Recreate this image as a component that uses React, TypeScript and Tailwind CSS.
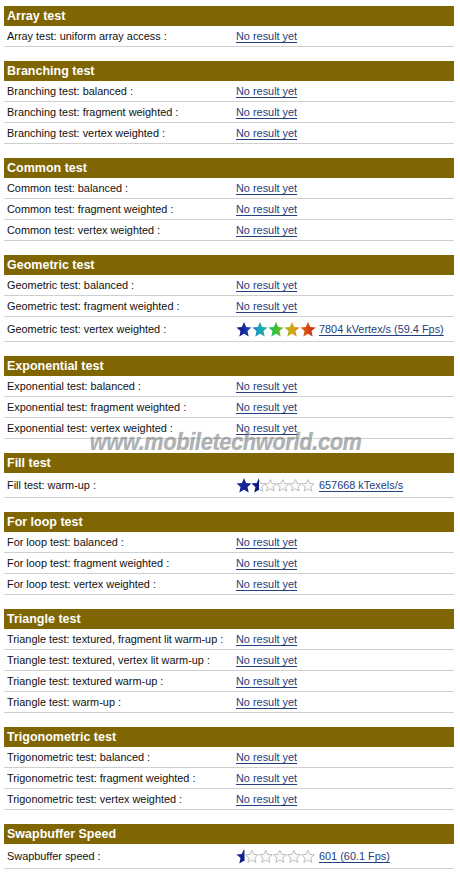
import React from 'react'

type Rating = 'geo' | 'fill' | 'swap'

type Row = {
  label: string
  rating?: Rating
  result?: string
}

type Section = {
  title: string
  rows: Row[]
}

const SECTIONS: Section[] = [
  { title: 'Array test', rows: [{ label: 'Array test: uniform array access :' }] },
  {
    title: 'Branching test',
    rows: [
      { label: 'Branching test: balanced :' },
      { label: 'Branching test: fragment weighted :' },
      { label: 'Branching test: vertex weighted :' },
    ],
  },
  {
    title: 'Common test',
    rows: [
      { label: 'Common test: balanced :' },
      { label: 'Common test: fragment weighted :' },
      { label: 'Common test: vertex weighted :' },
    ],
  },
  {
    title: 'Geometric test',
    rows: [
      { label: 'Geometric test: balanced :' },
      { label: 'Geometric test: fragment weighted :' },
      {
        label: 'Geometric test: vertex weighted :',
        rating: 'geo',
        result: '7804 kVertex/s (59.4 Fps)',
      },
    ],
  },
  {
    title: 'Exponential test',
    rows: [
      { label: 'Exponential test: balanced :' },
      { label: 'Exponential test: fragment weighted :' },
      { label: 'Exponential test: vertex weighted :' },
    ],
  },
  {
    title: 'Fill test',
    rows: [{ label: 'Fill test: warm-up :', rating: 'fill', result: '657668 kTexels/s' }],
  },
  {
    title: 'For loop test',
    rows: [
      { label: 'For loop test: balanced :' },
      { label: 'For loop test: fragment weighted :' },
      { label: 'For loop test: vertex weighted :' },
    ],
  },
  {
    title: 'Triangle test',
    rows: [
      { label: 'Triangle test: textured, fragment lit warm-up :' },
      { label: 'Triangle test: textured, vertex lit warm-up :' },
      { label: 'Triangle test: textured warm-up :' },
      { label: 'Triangle test: warm-up :' },
    ],
  },
  {
    title: 'Trigonometric test',
    rows: [
      { label: 'Trigonometric test: balanced :' },
      { label: 'Trigonometric test: fragment weighted :' },
      { label: 'Trigonometric test: vertex weighted :' },
    ],
  },
  {
    title: 'Swapbuffer Speed',
    rows: [{ label: 'Swapbuffer speed :', rating: 'swap', result: '601 (60.1 Fps)' }],
  },
]

// five-point star, 16 units wide at scale 1, left edge at x, top at y
const PTS: [number, number][] = [
  [8, 0.6], [10.2, 5.5], [15.5, 6], [11.5, 9.6], [12.7, 14.9],
  [8, 12.2], [3.3, 14.9], [4.5, 9.6], [0.5, 6], [5.8, 5.5],
]

function star(x: number, y: number, s = 1) {
  return (
    PTS.map(([px, py], i) => `${i ? 'L' : 'M'}${(x + px * s).toFixed(2)} ${(y + py * s).toFixed(2)}`).join(' ') +
    ' Z'
  )
}

function Empty({ x, s }: { x: number; s: number }) {
  return (
    <path
      d={star(x, 8 - 8 * s + 0.5, s)}
      fill="#fbfbf6"
      stroke="#b5b5b5"
      strokeWidth={0.9}
      strokeLinejoin="round"
    />
  )
}

function Stars({ kind }: { kind: Rating }) {
  if (kind === 'geo') {
    return (
      <svg width="80" height="17" viewBox="0 0 80 17" className="shrink-0">
        <defs>
          <linearGradient id="spectrum" gradientUnits="userSpaceOnUse" x1="0" y1="0" x2="80" y2="0">
            <stop offset="0" stopColor="#0c0c86" />
            <stop offset="0.14" stopColor="#1a3aa8" />
            <stop offset="0.28" stopColor="#1aa2c4" />
            <stop offset="0.4" stopColor="#1ab88a" />
            <stop offset="0.5" stopColor="#3cc02a" />
            <stop offset="0.64" stopColor="#a8b818" />
            <stop offset="0.72" stopColor="#e0a214" />
            <stop offset="0.84" stopColor="#e05a14" />
            <stop offset="1" stopColor="#c81e12" />
          </linearGradient>
        </defs>
        {[0, 16, 32, 48, 64].map((x) => (
          <path key={x} d={star(x, 0.5)} fill="url(#spectrum)" />
        ))}
      </svg>
    )
  }
  if (kind === 'fill') {
    return (
      <svg width="80" height="17" viewBox="0 0 80 17" className="shrink-0">
        <defs>
          <linearGradient id="blueA" gradientUnits="userSpaceOnUse" x1="0" y1="0" x2="30" y2="16">
            <stop offset="0" stopColor="#1c2ca6" />
            <stop offset="1" stopColor="#0a1270" />
          </linearGradient>
          <clipPath id="halfA">
            <rect x="15" y="0" width="8" height="17" />
          </clipPath>
        </defs>
        <path d={star(0, 0.5)} fill="url(#blueA)" />
        <Empty x={16} s={0.85} />
        <path d={star(15, 0.5)} fill="url(#blueA)" clipPath="url(#halfA)" />
        {[28, 40.5, 53, 65.5].map((x) => (
          <Empty key={x} x={x} s={0.8} />
        ))}
      </svg>
    )
  }
  return (
    <svg width="80" height="17" viewBox="0 0 80 17" className="shrink-0">
      <defs>
        <linearGradient id="blueB" gradientUnits="userSpaceOnUse" x1="0" y1="0" x2="16" y2="16">
          <stop offset="0" stopColor="#1c2ca6" />
          <stop offset="1" stopColor="#0a1270" />
        </linearGradient>
        <clipPath id="halfB">
          <rect x="0" y="0" width="8.5" height="17" />
        </clipPath>
      </defs>
      <path d={star(0, 0.5)} fill="url(#blueB)" clipPath="url(#halfB)" />
      {[9, 23, 37, 51, 65].map((x) => (
        <Empty key={x} x={x} s={0.85} />
      ))}
    </svg>
  )
}

function ResultRow({ row }: { row: Row }) {
  const tall = !!row.rating
  return (
    <div
      className={`grid grid-cols-[232px_1fr] items-center border-b border-[#cfcfcf] ${
        tall ? 'h-[25px]' : 'h-[21px]'
      }`}
    >
      <span className="pl-[3px] text-[#111]">{row.label}</span>
      {row.rating ? (
        <span className="flex items-center gap-[3px]">
          <Stars kind={row.rating} />
          <a href="#" className="text-[#25407e] underline underline-offset-2">
            {row.result}
          </a>
        </span>
      ) : (
        <a href="#" className="text-[#25407e] underline underline-offset-2">
          No result yet
        </a>
      )}
    </div>
  )
}

export default function App() {
  return (
    <div className="relative min-h-[879px] w-[460px] bg-white pt-[6px] font-['Liberation_Sans',Arial,sans-serif] text-[10.9px]">
      {SECTIONS.map((section) => (
        <div key={section.title} className="mb-[14px] ml-[4px] w-[450px]">
          <div className="flex h-[20px] items-center bg-[#806503] pl-[3px] text-[12.5px] font-bold text-white">
            {section.title}
          </div>
          {section.rows.map((row) => (
            <ResultRow key={row.label} row={row} />
          ))}
        </div>
      ))}

      {/* watermark baked into the original screenshot */}
      <div className="pointer-events-none absolute left-[90px] top-[424px] origin-top-left scale-y-[1.15] select-none whitespace-nowrap text-[21.5px] font-bold italic tracking-[-0.2px] text-[#7e7e7e] opacity-60 [text-shadow:1px_1px_0_#ffffff,0_0_1px_#555555]">
        www.mobiletechworld.com
      </div>
    </div>
  )
}
